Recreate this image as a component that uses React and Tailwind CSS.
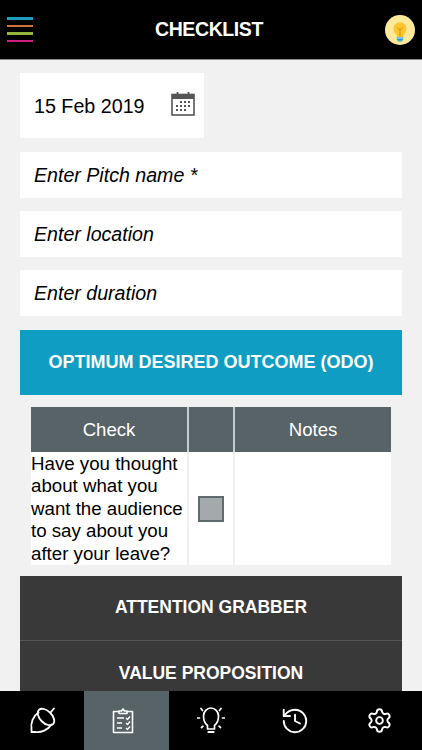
import React from "react";
import { History, Settings } from "lucide-react";

const Acorn = () => (
    <svg width="27" height="29" viewBox="0 0 27 29" fill="none" stroke="white" strokeWidth="1.8" strokeLinecap="round" strokeLinejoin="round">
        <ellipse cx="17" cy="11" rx="10" ry="6" transform="rotate(45 17 11)" />
        <path d="M9.5 6.5 C4 10 1.5 17 2.5 23 L2.5 26 L6 26 C12 27 19 24 22.5 18.5" />
        <path d="M21.5 6.5 L25 2.5" />
    </svg>
);

const Clipboard = () => (
    <svg width="22" height="26" viewBox="0 0 22 26" fill="none" stroke="white" strokeWidth="1.6" strokeLinejoin="round">
        <path d="M7 3.5 H1.5 V24.5 H20.5 V3.5 H15" />
        <path d="M7 5.5 V3 H9.5 L11 1 L12.5 3 H15 V5.5 Z" />
        <path d="M5 10 H12 M5 15 H10 M5 20 H10" />
        <path d="M14 10 L15.5 11.5 L18 8.5 M14 15 L15.5 16.5 L18 13.5 M14 20 L15.5 21.5 L18 18.5" strokeWidth="1.3" />
    </svg>
);

const RayBulb = () => (
    <svg width="28" height="28" viewBox="0 0 28 28" fill="none" stroke="white" strokeWidth="1.7" strokeLinecap="round" strokeLinejoin="round">
        <path d="M10.5 22 V18.5 C8 16.5 6.5 13.5 6.5 9 C6.5 4.5 10 1 14 1 C18 1 21.5 4.5 21.5 9 C21.5 13.5 20 16.5 17.5 18.5 V22 Z" />
        <path d="M11.5 25 H16.5" strokeWidth="2.2" />
        <path d="M0.5 11 H2.5 M25.5 11 H27.5 M4 1.5 L5.5 3.5 M24 1.5 L22.5 3.5 M4.5 20.5 L6 19.2 M23.5 20.5 L22 19.2" />
    </svg>
);

const CalendarIcon = () => (
    <svg width="24" height="25" viewBox="0 0 24 25" fill="none">
        <rect x="1" y="3.5" width="22" height="20.5" stroke="#555" strokeWidth="1.6" />
        <rect x="1" y="3.5" width="22" height="4.5" fill="#555" />
        <path d="M6.5 1 V6 M17.5 1 V6" stroke="#555" strokeWidth="1.8" />
        <path d="M9 11 H11 M13 11 H15 M17 11 H19 M5 15 H7 M9 15 H11 M13 15 H15 M17 15 H19 M5 19 H7 M9 19 H11 M13 19 H15" stroke="#555" strokeWidth="2" />
    </svg>
);

const TopBulb = () => (
    <svg width="30" height="30" viewBox="0 0 30 30" fill="none">
        <path d="M11.5 20 C9.5 18 8.5 16 8.5 13.5 C8.5 10 11.5 7.5 15 7.5 C18.5 7.5 21.5 10 21.5 13.5 C21.5 16 20.5 18 18.5 20 L18 22 H12 Z" fill="#fdc62e" />
        <path d="M12.5 12.5 L15 15 L17.5 12.5 M15 15 V21.5" stroke="#c98f12" strokeWidth="1" />
        <rect x="11.5" y="22" width="7" height="2" fill="#6ec6e4" />
        <rect x="12" y="24" width="6" height="1.5" fill="#2a9ccb" />
        <rect x="13" y="25.5" width="4" height="1" fill="#2a9ccb" />
    </svg>
);

const Field = ({ text }) => (
    <div className="bg-white h-[46px] flex items-center pl-[14px] pt-[2px] text-[19.6px] italic text-black">{text}</div>
);

const App = () => {
    return (
        <div className="w-[422px] h-[750px] overflow-hidden flex flex-col bg-[#f1f1f1] font-['Liberation_Sans',Arial,sans-serif]">
            <header className="h-[60px] shrink-0 bg-black border-b border-[#8a8a8a] flex items-center justify-between pl-[7px] pr-[7px]">
                <div className="w-[26px] flex flex-col gap-[5px]">
                    <div className="h-[2.5px] bg-[#1b9cc0]" />
                    <div className="h-[2.5px] bg-[#d2713a]" />
                    <div className="h-[2.5px] bg-[#95b53c]" />
                    <div className="h-[2.5px] bg-[#cf1f7c]" />
                </div>
                <h1 className="text-white font-bold text-[19.5px] tracking-[-0.4px]">CHECKLIST</h1>
                <div className="w-[30px] h-[30px] rounded-full bg-[#fee89a] flex items-center justify-center"><TopBulb /></div>
            </header>

            <main className="flex-1 min-h-0 overflow-hidden px-5 pt-[13px] flex flex-col">
                <div className="w-[184px] h-[65px] bg-white flex items-center justify-between pl-[14px] pr-[9px] text-[19.7px] text-black shrink-0">
                    <span className="pt-[2px]">15 Feb 2019</span>
                    <div className="-mt-[5px]"><CalendarIcon /></div>
                </div>
                <div className="mt-[14px] flex flex-col gap-[13px] shrink-0">
                    <Field text="Enter Pitch name *" />
                    <Field text="Enter location" />
                    <Field text="Enter duration" />
                </div>
                <div className="mt-[14px] h-[65px] bg-[#0f9dc4] shrink-0 flex items-center justify-center text-white font-bold text-[18px]">
                    OPTIMUM DESIRED OUTCOME (ODO)
                </div>

                <div className="mx-[11px] mt-[12px] shrink-0 grid grid-cols-[156px_48px_1fr] w-[360px]">
                    <div className="h-[45px] bg-[#576366] text-white text-[18.6px] flex items-center justify-center">Check</div>
                    <div className="h-[45px] bg-[#576366] border-x-2 border-[#c5cacb]" />
                    <div className="h-[45px] bg-[#576366] text-white text-[18.6px] flex items-center justify-center">Notes</div>
                    <div className="h-[113px] bg-white pt-px text-[18.7px] leading-[22.4px] text-black">Have you thought about what you want the audience to say about you after your leave?</div>
                    <div className="h-[113px] bg-white border-x-2 border-[#f1f1f1] flex items-center justify-center">
                        <div className="w-[26px] h-[26px] bg-[#a4a9ab] border-2 border-[#5f6b6e]" />
                    </div>
                    <div className="h-[113px] bg-white" />
                </div>

                <div className="mt-[11px] shrink-0 bg-[#393939] text-white font-bold text-[17.5px]">
                    <div className="h-[65px] pb-px flex items-center justify-center border-b border-[#555]">ATTENTION GRABBER</div>
                    <div className="h-[65px] flex items-center justify-center">VALUE PROPOSITION</div>
                </div>
            </main>

            <nav className="h-[59px] shrink-0 bg-black grid grid-cols-5">
                <div className="flex items-center justify-center"><Acorn /></div>
                <div className="flex items-center justify-center bg-[#576366] pr-[7px]"><Clipboard /></div>
                <div className="flex items-center justify-center"><RayBulb /></div>
                <div className="flex items-center justify-center"><History size={30} color="white" strokeWidth={1.5} /></div>
                <div className="flex items-center justify-center"><Settings size={27} color="white" strokeWidth={1.7} /></div>
            </nav>
        </div>
    );
};

export default App;
